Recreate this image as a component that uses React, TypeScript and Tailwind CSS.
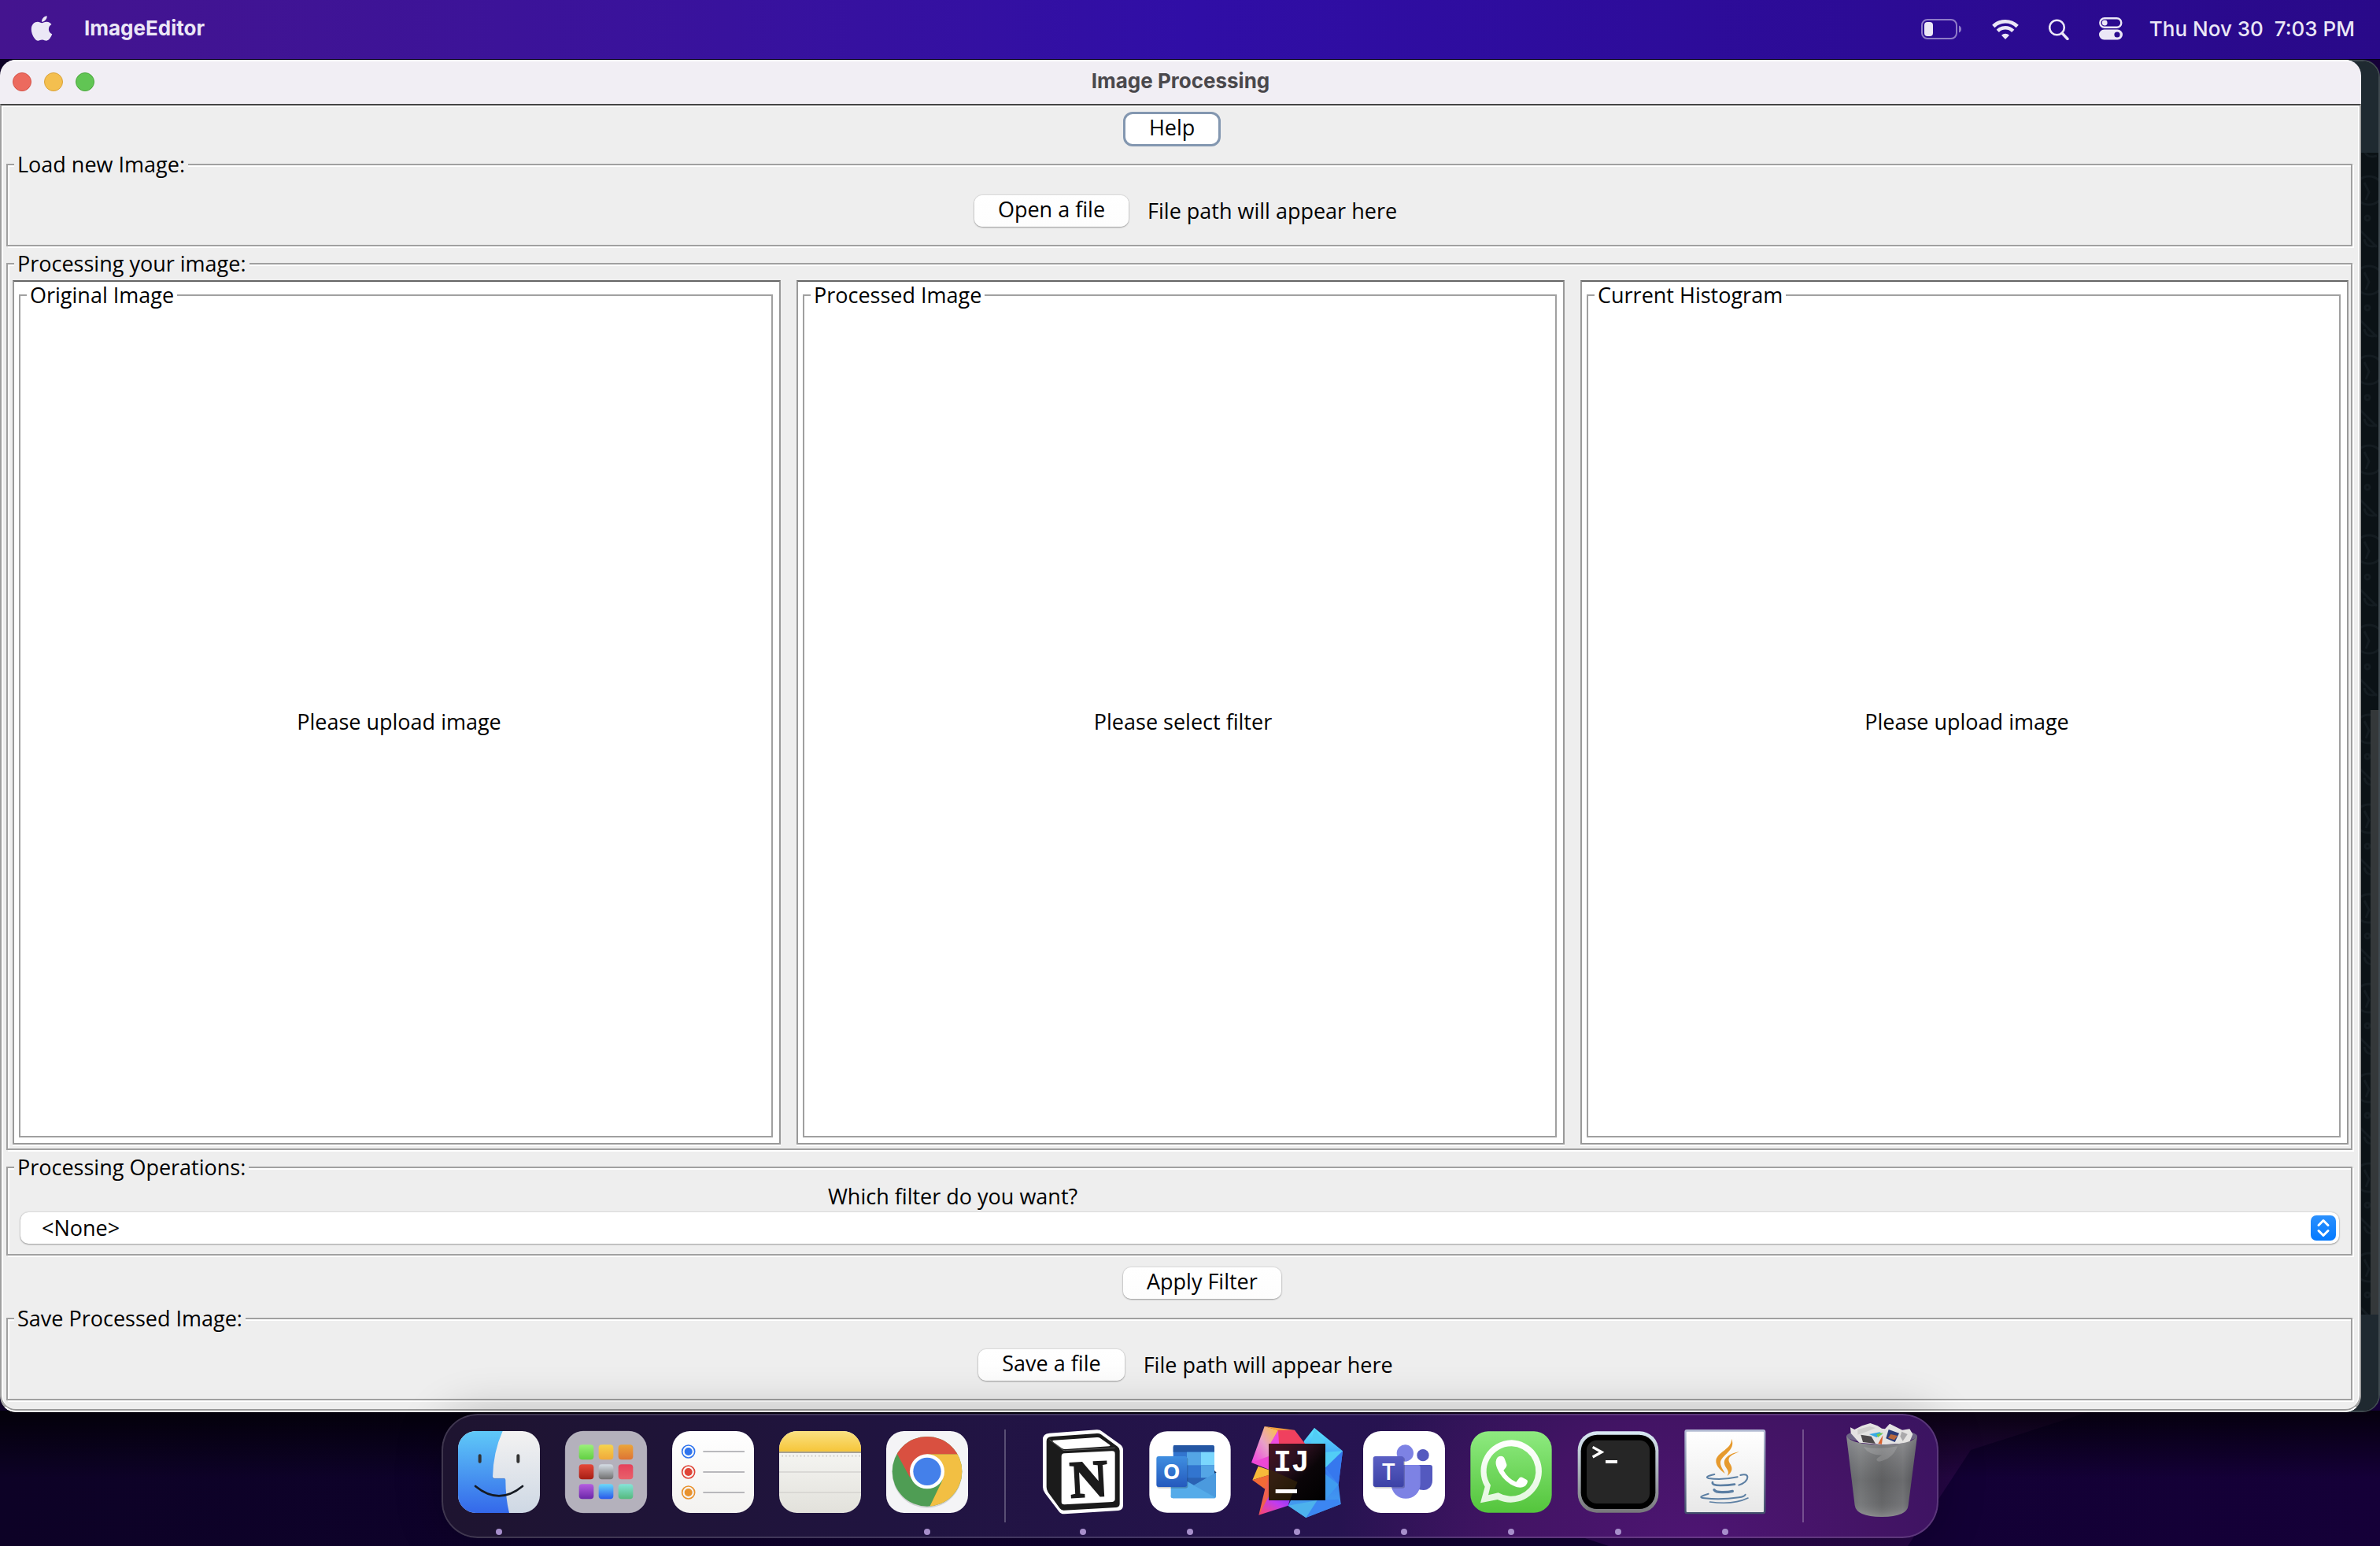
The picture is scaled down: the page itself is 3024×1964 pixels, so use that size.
import React from "react";
import { FaApple } from "react-icons/fa";

const etched =
  "border-2 border-[#a0a0a0] shadow-[2px_2px_0_#fff,inset_2px_2px_0_#fff]";

function Group({
  title,
  className = "",
  white = false,
  children,
}: {
  title: string;
  className?: string;
  white?: boolean;
  children: React.ReactNode;
}) {
  return (
    <fieldset className={`flex min-w-0 flex-col ${etched} ${className}`}>
      <legend className={`ml-2 px-1 leading-[30px] ${white ? "bg-white" : "bg-[#eeeeee]"}`}>
        {title}
      </legend>
      {children}
    </fieldset>
  );
}

function PushButton({ children, focused = false }: { children: React.ReactNode; focused?: boolean }) {
  return (
    <button
      type="button"
      className={
        focused
          ? "h-11 rounded-[12px] border-3 border-[#8397b0] bg-white px-[30px] pb-1 leading-[30px]"
          : "h-10 rounded-[10px] bg-linear-to-b from-white to-[#fdfdfd] px-[30px] pb-1 leading-[30px] shadow-[0_0_2px_rgba(0,0,0,0.25),0_1px_2px_rgba(0,0,0,0.3)]"
      }
    >
      {children}
    </button>
  );
}

function FileRow({ action }: { action: string }) {
  return (
    <div className="flex items-center justify-center gap-6 pt-6 pb-[23px] pl-4">
      <PushButton>{action}</PushButton>
      <span>File path will appear here</span>
    </div>
  );
}

function Panel({ title, message }: { title: string; message: string }) {
  return (
    <div className="flex flex-1 flex-col border-2 border-[#999999] border-t-[#666666] bg-white pt-[2px] pr-2 pb-[7px] pl-[6px] shadow-[0_2px_0_#fff]">
      <Group title={title} white className="flex-1">
        <div className="flex h-full flex-1 items-center justify-center pl-2">{message}</div>
      </Group>
    </div>
  );
}

function BatteryIcon() {
  return (
    <svg width="52" height="30" viewBox="0 0 52 30" fill="none" aria-label="Battery">
      <rect x="1" y="3" width="44" height="24" rx="7" stroke="#8f7cc8" strokeWidth="2" />
      <rect x="4" y="6" width="11" height="18" rx="4" fill="#ebe7f6" />
      <path d="M48 10.500c4 1.500 4 7.500 0 9z" fill="#8f7cc8" />
    </svg>
  );
}

function WifiIcon() {
  return (
    <svg width="34" height="28" viewBox="0 0 34 28" fill="none" aria-label="Wi-Fi">
      <path d="M1.800 10.500A21.500 21.500 0 0 1 32.200 10.500" stroke="#ebe7f6" strokeWidth="4.600" />
      <path d="M7.300 16.300A13.700 13.700 0 0 1 26.700 16.300" stroke="#ebe7f6" strokeWidth="4.600" />
      <path d="M17 27l-5-5.200a7.200 7.200 0 0 1 10 0z" fill="#ebe7f6" />
    </svg>
  );
}

function SearchIcon() {
  return (
    <svg width="26" height="28" viewBox="0 0 26 28" fill="none" aria-label="Search">
      <circle cx="10.500" cy="12" r="9.300" stroke="#ebe7f6" strokeWidth="2.600" />
      <path d="M17 19l7 7.500" stroke="#ebe7f6" strokeWidth="3.400" strokeLinecap="round" />
    </svg>
  );
}

function ControlIcon() {
  return (
    <svg width="30" height="29" viewBox="0 0 30 29" fill="none" aria-label="Control Center">
      <rect x="1.300" y="1.300" width="27" height="11.400" rx="5.700" stroke="#ebe7f6" strokeWidth="2.400" />
      <circle cx="7.200" cy="7" r="3.400" fill="#ebe7f6" />
      <path
        fillRule="evenodd"
        d="M6.500 15.500h17a6.500 6.500 0 0 1 0 13h-17a6.500 6.500 0 0 1 0-13zM23 18.400a3.600 3.600 0 1 0 0 7.200a3.600 3.600 0 0 0 0-7.200z"
        fill="#ebe7f6"
      />
    </svg>
  );
}

function MenuBar() {
  return (
    <header className="flex h-[76px] items-center border-b border-[#05001a] bg-linear-to-r from-[#44148f] via-[#300ea6] to-[#290989] pr-8 pl-[39px] font-['Inter'] text-[26px] text-[#ebe7f6]">
      <button type="button" aria-label="Apple menu" className="mr-10 pb-1">
        <FaApple className="h-9 w-7" />
      </button>
      <button type="button" className="pb-1 font-bold">ImageEditor</button>
      <div className="ml-auto flex items-center gap-[38px] pb-[2px]">
        <BatteryIcon />
        <WifiIcon />
        <SearchIcon />
        <ControlIcon />
        <span className="-ml-1 font-medium whitespace-pre">Thu Nov 30  7:03 PM</span>
      </div>
    </header>
  );
}

function BackWindow() {
  const rows = Array.from({ length: 13 }, (_, i) => i);
  return (
    <div className="absolute inset-y-0 right-0 flex w-40 flex-col overflow-hidden rounded-[22px] border-2 border-[#3f494f] bg-[#0b1216]">
      <div className="h-[116px] bg-[#1f2a31]" />
      <div className="relative flex-1 overflow-hidden">
        <svg className="absolute top-0 right-0" width="24" height="1480" fill="none" stroke="#141c21" strokeWidth="3" aria-hidden="true">
          {rows.map((i) => (
            <g key={i} transform={`translate(0 ${i * 114})`}>
              <circle cx="12" cy="48" r="18" />
              <path d="M6 38l6 12l-4 10" />
              <circle cx="10" cy="83" r="3" />
              <path d="M0 98l22 22M22 4q-14 4-16-8" />
            </g>
          ))}
        </svg>
        <div className="absolute right-0 bottom-0 h-[52%] w-[10px] bg-[#34383a]" />
      </div>
      <div className="h-[122px] bg-[#1f2930]" />
    </div>
  );
}

function AppWindow() {
  return (
    <main className="relative flex flex-1 flex-col overflow-hidden rounded-[20px]">
      <div className="grid h-14 grid-cols-[1fr_auto_1fr] items-center border-t-2 border-white bg-[#f1eef4] px-4 pb-[2px] font-['Inter']">
        <div className="flex gap-4">
          <button type="button" aria-label="Close" className="size-6 rounded-full border border-[#d5544a] bg-[#ec6a5e]" />
          <button type="button" aria-label="Minimize" className="size-6 rounded-full border border-[#d9a23a] bg-[#f4bf4f]" />
          <button type="button" aria-label="Zoom" className="size-6 rounded-full border border-[#4aa73c] bg-[#61c554]" />
        </div>
        <h1 className="pb-[2px] text-[26px] font-bold text-[#4a484c]">Image Processing</h1>
      </div>

      <div className="flex flex-1 flex-col rounded-b-[20px] border-2 border-[#a0a0a0] border-t-[#444444] border-b-white bg-[#eeeeee] pt-2 pr-[9px] pb-[13px] pl-[6px] text-black shadow-[inset_0_-2px_0_#999,inset_0_0_0_2px_#fff]">
        <div className="pb-2 pl-[47.6%]">
          <PushButton focused>Help</PushButton>
        </div>

        <Group title="Load new Image:">
          <FileRow action="Open a file" />
        </Group>

        <Group title="Processing your image:" className="mt-[7px] flex-1">
          <div className="flex h-full flex-1 gap-5 pt-[6px] pr-[3px] pb-[5px] pl-[6px]">
            <Panel title="Original Image" message="Please upload image" />
            <Panel title="Processed Image" message="Please select filter" />
            <Panel title="Current Histogram" message="Please upload image" />
          </div>
        </Group>

        <Group title="Processing Operations:" className="mt-[7px]">
          <label htmlFor="filter" className="pt-[7px] pl-[35%] leading-[30px]">
            Which filter do you want?
          </label>
          <div className="relative mt-[5px] mr-[15px] mb-[13px] ml-4">
            <select
              id="filter"
              className="block h-10 w-full appearance-none rounded-[10px] bg-white px-[27px] leading-[30px] shadow-[0_0_2px_rgba(0,0,0,0.25),0_1px_2px_rgba(0,0,0,0.3)]"
            >
              <option>&lt;None&gt;</option>
            </select>
            <svg className="pointer-events-none absolute top-1 right-1" width="32" height="32" viewBox="0 0 32 32" fill="none" aria-hidden="true">
              <defs>
                <linearGradient id="stepper" x2="0" y2="1">
                  <stop stopColor="#2b90fd" />
                  <stop offset="1" stopColor="#047aff" />
                </linearGradient>
              </defs>
              <rect width="32" height="32" rx="7" fill="url(#stepper)" />
              <path d="M10 12.500l6-6l6 6M10 19.500l6 6l6-6" stroke="#fff" strokeWidth="3" strokeLinecap="round" strokeLinejoin="round" />
            </svg>
          </div>
        </Group>

        <div className="pt-[15px] pb-[10px] pl-[47.6%]">
          <PushButton>Apply Filter</PushButton>
        </div>

        <Group title="Save Processed Image:">
          <FileRow action="Save a file" />
        </Group>
      </div>
    </main>
  );
}

function DockItem({
  name,
  box = "0 0 408 474",
  running = false,
  children,
}: {
  name: string;
  box?: string;
  running?: boolean;
  children: React.ReactNode;
}) {
  return (
    <button type="button" aria-label={name} className="relative block w-[136px]">
      <svg width="136" height="158" viewBox={box} aria-hidden="true">
        {children}
      </svg>
      {running && <span className="absolute bottom-1 left-16 size-2 rounded-full bg-[#a78fcb]" />}
    </button>
  );
}

function DockDivider() {
  return (
    <div className="flex w-[62px] items-center justify-center">
      <div className="h-[118px] w-[2px] bg-white/25" />
    </div>
  );
}

function Grad({ id, from, to }: { id: string; from: string; to: string }) {
  return (
    <linearGradient id={id} x2="0" y2="1">
      <stop stopColor={from} />
      <stop offset="1" stopColor={to} />
    </linearGradient>
  );
}

const launchTiles = [
  ["#9bf07a", "#62cf43"],
  ["#f6d34d", "#f0a93b"],
  ["#eba53a", "#dd7434"],
  ["#e5483a", "#a61e14"],
  ["#d5dde5", "#6f6f6f"],
  ["#e6415a", "#e8616c"],
  ["#b55de0", "#6a26a8"],
  ["#69d8fa", "#2857ea"],
  ["#84e4d8", "#55b97d"],
];

function Dock() {
  return (
    <nav
      aria-label="Dock"
      className="relative mx-auto mt-[2px] mb-[10px] flex h-[158px] rounded-[46px] bg-[radial-gradient(ellipse_460px_300px_at_84%_100%,#4d1572_0%,#431465_50%,transparent_100%),linear-gradient(90deg,#1e1430_0%,#201440_30%,#261350_60%,#2b1454_75%,#36145f_100%)] px-[5px] shadow-[inset_0_0_0_2px_rgba(255,255,255,0.15),0_0_60px_rgba(0,0,0,0.24)]"
    >
      <DockItem name="Finder" running>
        <defs>
          <Grad id="finderBlue" from="#5fc9f8" to="#3468ea" />
          <Grad id="finderWhite" from="#f3f2f2" to="#ced8e4" />
          <clipPath id="finderClip"><rect x="48" y="66" width="312" height="312" rx="68" /></clipPath>
        </defs>
        <g clipPath="url(#finderClip)">
          <rect x="48" y="66" width="312" height="312" fill="url(#finderWhite)" />
          <path d="M48 66h170q-36 80-38 175q0 6 6 6h39q4 0 4 5q0 70 14 126H48z" fill="url(#finderBlue)" />
          <path d="M180 241q0 6 6 6h40" fill="none" stroke="#2b63c0" strokeOpacity=".5" strokeWidth="3" />
          <path d="M131 160v22M277 160v22" stroke="#333" strokeWidth="12" strokeLinecap="round" />
          <path d="M114 276q90 74 180 0" fill="none" stroke="#151a22" strokeWidth="8" strokeLinecap="round" />
        </g>
      </DockItem>

      <DockItem name="Launchpad">
        <defs>
          {launchTiles.map(([a, b], i) => (
            <Grad key={i} id={`tile${i}`} from={a} to={b} />
          ))}
        </defs>
        <rect x="49" y="67" width="310" height="310" rx="68" fill="#b4b1bc" stroke="#cbc9d2" strokeWidth="2" />
        {launchTiles.map((_, i) => (
          <rect
            key={i}
            x={101 + (i % 3) * 75}
            y={118 + Math.floor(i / 3) * 75}
            width="56"
            height="57"
            rx="12"
            fill={`url(#tile${i})`}
          />
        ))}
      </DockItem>

      <DockItem name="Reminders">
        <defs><Grad id="paper" from="#ffffff" to="#f3f2f0" /></defs>
        <rect x="48" y="66" width="312" height="312" rx="68" fill="url(#paper)" />
        {["#2f74ee", "#df4538", "#e8922e"].map((c, i) => (
          <g key={c}>
            <circle cx="110" cy={144 + i * 78} r="24" fill="none" stroke={c} strokeWidth="5" />
            <circle cx="110" cy={144 + i * 78} r="15" fill={c} />
            <path d={`M166 ${144 + i * 78}h158`} stroke="#a3a3a8" strokeWidth="5" />
          </g>
        ))}
      </DockItem>

      <DockItem name="Notes">
        <defs>
          <Grad id="noteTop" from="#fae182" to="#f6c63a" />
          <Grad id="notePage" from="#fbfbf9" to="#e2e1db" />
          <clipPath id="noteClip"><rect x="48" y="66" width="312" height="312" rx="68" /></clipPath>
        </defs>
        <g clipPath="url(#noteClip)">
          <rect x="48" y="66" width="312" height="312" fill="url(#notePage)" />
          <rect x="48" y="66" width="312" height="78" fill="url(#noteTop)" />
          <path d="M48 147h312" stroke="#8b8473" strokeWidth="5" />
          <path d="M58 161h300" stroke="#c9c7c3" strokeWidth="5" strokeDasharray="5 9" />
          <path d="M48 222h312M48 300h312" stroke="#d3d2d0" strokeWidth="5" />
        </g>
      </DockItem>

      <DockItem name="Chrome" running>
        <defs><clipPath id="chromeClip"><circle cx="204" cy="220" r="133" /></clipPath></defs>
        <rect x="48" y="66" width="312" height="312" rx="68" fill="#f4f4f6" />
        <circle cx="204" cy="226" r="133" fill="#00000022" />
        <g clipPath="url(#chromeClip)">
          <rect x="60" y="80" width="290" height="290" fill="#4f9d54" />
          <path d="M204 154h150v220H204l58-120z" fill="#f2bf43" />
          <path d="M70 60h280v94H204l-66 88L86 146z" fill="#d95040" />
        </g>
        <circle cx="204" cy="220" r="66" fill="#fff" />
        <circle cx="204" cy="220" r="53" fill="#4480ea" />
      </DockItem>

      <DockDivider />

      <DockItem name="Notion" running box="-6 0 408 474">
        <path d="M70 74L250 61q12-1 22 7l68 49q11 8 11 22v210q0 18-18 20l-205 13q-14 1-22-10l-52-68q-9-12-9-26V98q0-22 25-24z" fill="#fff" />
        <path d="M80 87l172-12q8-1 15 4l63 46q8 6 8 16v202q0 13-13 14l-199 11q-10 1-16-7l-45-62q-6-9-6-20V104q0-16 21-17z" fill="#1b1b1b" />
        <path d="M84 107q-5-5 3-6l164-11q8-1 14 4l34 24q6 5-2 6l-164 11q-9 1-16-4z" fill="#fff" />
        <path d="M127 151l182-9q11 0 11 10v173q0 10-10 11l-183 10q-11 0-11-10V162q0-10 11-11z" fill="#fff" />
        <path d="M70 98l48 38q4 4 12 4l190-10" fill="none" stroke="#5a5a5a" strokeWidth="3" />
        <text x="220" y="315" textAnchor="middle" fontFamily="Liberation Serif, serif" fontWeight="700" fontSize="198" fill="#1b1b1b" stroke="#1b1b1b" strokeWidth="7" transform="rotate(-3 220 250)">N</text>
      </DockItem>

      <DockItem name="Outlook" running box="402 0 408 474">
        <defs>
          <Grad id="outTile" from="#3f8ee0" to="#2459bd" />
          <clipPath id="outClip"><path d="M551 119h138q10 0 10 10v190H541V129q0-10 10-10z" /></clipPath>
        </defs>
        <rect x="451" y="67" width="310" height="310" rx="68" fill="#fff" />
        <g clipPath="url(#outClip)">
          <rect x="541" y="119" width="158" height="200" fill="#3275cf" />
          <rect x="541" y="119" width="158" height="27" fill="#2456a3" />
          <rect x="594" y="146" width="54" height="50" fill="#54a5e5" />
          <rect x="648" y="146" width="52" height="50" fill="#7ad6fd" />
          <rect x="648" y="196" width="52" height="50" fill="#54a5e5" />
          <rect x="541" y="244" width="158" height="80" fill="#2a62b4" />
        </g>
        <path d="M699 216l8 8l-8 8z" fill="#16305e" />
        <path d="M622 272l83-48v90q0 8-8 8H541q-8 0-8-10z" fill="#4a9de0" />
        <path d="M533 222l170 98q-3 2-8 2H541q-8 0-8-9z" fill="#55abe9" />
        <path d="M705 226v90L620 273z" fill="#4b9ade" />
        <rect x="480" y="166" width="118" height="118" rx="9" fill="#00000033" />
        <rect x="478" y="162" width="117" height="117" rx="9" fill="url(#outTile)" />
        <text x="536" y="249" textAnchor="middle" fontFamily="Open Sans, sans-serif" fontWeight="700" fontSize="82" fill="#fff">O</text>
      </DockItem>

      <DockItem name="IntelliJ IDEA" running box="810 0 408 474">
        <defs>
          <linearGradient id="ijA" x1="0" y1="1" x2="1" y2="0">
            <stop stopColor="#f03ce0" /><stop offset=".5" stopColor="#e8a0c8" /><stop offset="1" stopColor="#fbc63c" />
          </linearGradient>
          <linearGradient id="ijB" x1="0" y1="1" x2="1" y2="0">
            <stop stopColor="#ff4766" /><stop offset=".6" stopColor="#c03cf0" /><stop offset="1" stopColor="#7a3cf8" />
          </linearGradient>
          <linearGradient id="ijC" x1="0" y1="0" x2="0" y2="1">
            <stop stopColor="#5ae6ff" /><stop offset=".5" stopColor="#3a7ff2" /><stop offset="1" stopColor="#46a6ee" />
          </linearGradient>
          <linearGradient id="ijD" x2="1" y2="1">
            <stop stopColor="#4a1420" /><stop offset=".35" stopColor="#2c1020" /><stop offset=".6" stopColor="#0a0508" /><stop offset="1" stopColor="#000" />
          </linearGradient>
        </defs>
        <path d="M1040 104l40-50l108 88l-16 128l9 74l-133 52l-68-46l60-120z" fill="url(#ijC)" />
        <path d="M1080 54l-14 62h56zM1188 142l-66 64v-60z" fill="#52cdf6" />
        <path d="M1188 142l-66 64l50 64z" fill="#3678ee" />
        <path d="M1122 230v98l50-58z" fill="#3f9cf0" />
        <path d="M1181 344l-133 52l44-66l80-4z" fill="#3c86f2" />
        <path d="M1048 396l-68-46l110-20z" fill="#4db2ec" />
        <path d="M840 186l50-138l52 14l-14 60l-22 60z" fill="url(#ijA)" />
        <path d="M890 48l115 14l-63 2z" fill="#f2a03c" />
        <path d="M942 62h63l50 66H906z" fill="#f0405e" />
        <path d="M942 64l-36 60v20l40-16z" fill="#ee4ce0" />
        <path d="M840 186l66-24v50z" fill="#ee48d4" />
        <path d="M866 200l40 14v20l-62 19z" fill="#f7b93a" />
        <path d="M844 253l62-20v30l-14 24z" fill="#f26a36" />
        <path d="M906 240v90l-38 56l24-100z" fill="#f0604e" />
        <path d="M868 386l38-70h84l-10 34z" fill="url(#ijB)" />
        <rect x="906" y="114" width="216" height="216" fill="url(#ijD)" />
        <path d="M906 210l110 50l-30 70h-80z" fill="#3a2a08" fillOpacity=".6" />
        <text x="924" y="220" fontFamily="Liberation Mono, monospace" fontWeight="700" fontSize="114" fill="#fff">IJ</text>
        <rect x="932" y="288" width="82" height="15" fill="#fff" />
      </DockItem>

      <DockItem name="Teams" running>
        <defs><Grad id="teamTile" from="#5a5fc4" to="#3c42a6" /></defs>
        <rect x="48" y="66" width="312" height="312" rx="68" fill="#fff" />
        <circle cx="276" cy="158" r="23" fill="#5459bf" />
        <path d="M255 195h48q9 0 9 9v50c0 22-16 37-34 37q-14 0-23-6z" fill="#5459bf" />
        <path d="M155 195h102q9 0 9 9v64a53 53 0 0 1-111 0z" fill="#7d82e4" />
        <circle cx="208" cy="150" r="32" fill="#7d82e4" />
        <rect x="90" y="166" width="117" height="118" rx="9" fill="#00000033" />
        <rect x="86" y="162" width="117" height="117" rx="9" fill="url(#teamTile)" />
        <text x="145" y="252" textAnchor="middle" fontFamily="Open Sans, sans-serif" fontWeight="600" fontSize="88" fill="#fff">T</text>
      </DockItem>

      <DockItem name="WhatsApp" running box="6 0 408 474">
        <defs>
          <Grad id="wa" from="#8eea80" to="#54c53c" />
          <Grad id="waRing" from="#ffffff" to="#e4f7df" />
        </defs>
        <rect x="55" y="67" width="310" height="310" rx="68" fill="url(#wa)" />
        <path
          fillRule="evenodd"
          d="M212 100a119 119 0 1 1-54 227l-65 13l17-62a119 119 0 0 1 102-178zM212 124a95 95 0 0 0-80 148l-9 38l38-9A95 95 0 1 0 212 124z"
          fill="url(#waRing)"
        />
        <path d="M163 163q16-5 22 8l8 22q2 6-3 12l-9 11q18 32 48 44l13-16q4-4 10-2l18 10q5 3 1 13q-9 21-38 15c-46-14-76-60-81-88q-2-21 11-29z" fill="#fff" />
      </DockItem>

      <DockItem name="Terminal" running box="414 0 408 474">
        <defs><Grad id="termRim" from="#d8e8f4" to="#77777a" /></defs>
        <rect x="464" y="67" width="308" height="310" rx="72" fill="url(#termRim)" />
        <rect x="476" y="80" width="284" height="283" rx="62" fill="#000" />
        <rect x="498" y="101" width="240" height="241" rx="38" fill="#262626" />
        <path d="M521 127l34 19l-34 19" fill="none" stroke="#fff" strokeWidth="10" />
        <rect x="570" y="177" width="45" height="12" fill="#fff" />
      </DockItem>

      <DockItem name="Java" running box="822 0 408 474">
        <defs><Grad id="javaPage" from="#ffffff" to="#e8e8e8" /><Grad id="javaRim" from="#b4bcd4" to="#42506c" /></defs>
        <rect x="871" y="60" width="309" height="322" rx="9" fill="url(#javaRim)" />
        <rect x="878" y="68" width="295" height="307" rx="3" fill="url(#javaPage)" />
        <path d="M1050 95c20 45-42 62-42 92c0 16 12 28 17 41c-18-14-35-30-34-49c2-33 62-44 59-84z" fill="#e69a2e" />
        <path d="M1080 145c-44 16-46 28-34 48c11 18 4 32-12 44c8-16 2-22-6-34c-16-26 4-50 52-58z" fill="#e69a2e" />
        <g fill="none" stroke="#5c7fa3" strokeLinecap="round">
          <path d="M985 231q-42 9-22 15q50 8 110-5" strokeWidth="6" />
          <path d="M1084 234c36-12 38 22-6 38" strokeWidth="6" />
          <path d="M978 261q-4 12 30 12q30 0 54-4" strokeWidth="8" />
          <path d="M984 290q6 10 34 9q22 0 36-4" strokeWidth="10" />
          <path d="M962 305q-48 14-14 17q60 7 130-3q22-3 25-11" strokeWidth="6" />
          <path d="M968 336q90 12 145-15" strokeWidth="5" />
        </g>
      </DockItem>

      <DockDivider />

      <DockItem name="Trash" box="-27 18 408 474">
        <defs>
          <linearGradient id="bin" x2="1" y2="0">
            <stop stopColor="#6f7177" /><stop offset=".2" stopColor="#7f8183" /><stop offset=".5" stopColor="#6b6c6e" /><stop offset=".8" stopColor="#7a7b7e" /><stop offset="1" stopColor="#5a5b60" />
          </linearGradient>
          <linearGradient id="binShade" x2="0" y2="1">
            <stop stopColor="#fff" stopOpacity=".18" /><stop offset=".55" stopColor="#000" stopOpacity=".12" /><stop offset=".8" stopColor="#000" stopOpacity=".06" /><stop offset="1" stopColor="#fff" stopOpacity=".18" />
          </linearGradient>
        </defs>
        <ellipse cx="180" cy="103" rx="135" ry="26" fill="#6d6585" />
        <path d="M62 92l-2-22l16 8l28-14l32-10l28 10l16 10l12 2l18-20l36 18l12 6l28-4l12 20l-14 34l-100 6l-90-8z" fill="#e4e3e2" />
        <path d="M88 78l46-12l22 6l-28 12l-40 14z" fill="#cfcecd" />
        <path d="M100 98l40 6l16 28l-48-6z" fill="#4e4a4c" />
        <path d="M132 96l40-8l10 8l-22 12z" fill="#36a9e4" />
        <path d="M160 96l26-6l-20 18z" fill="#7ccb46" />
        <path d="M184 100l-4 34l-14-2z" fill="#d9622e" />
        <path d="M206 78l40 14l-16 34l-34-14z" fill="#2e3c78" />
        <path d="M214 96l26 6l-12 16l-24-8z" fill="#b8663c" />
        <path d="M256 86l22 10l-18 26l-10-18z" fill="#aaa9ab" />
        <path d="M45 103q20 33 135 33t135-33l-34 264q-4 44-101 44T77 367z" fill="url(#bin)" />
        <path d="M45 103q20 33 135 33t135-33l-34 264q-4 44-101 44T77 367z" fill="url(#binShade)" />
        <path d="M110 144q60 12 130-2q-20 50-70 58q-24-6 10-24q-50 0-70-32z" fill="#fff" fillOpacity=".15" />
      </DockItem>
    </nav>
  );
}

export default function App() {
  return (
    <div className="relative flex min-h-screen flex-col overflow-hidden bg-linear-to-r from-[#0d0226] via-[#0f0130] to-[#150038] font-['Open_Sans',sans-serif] text-[27px] leading-[30px]">
      <svg className="absolute right-0 bottom-0" width="1400" height="180" viewBox="0 0 1400 180" aria-hidden="true">
        <defs>
          <linearGradient id="beam" x2="1" y2="0">
            <stop stopColor="#32085a" />
            <stop offset="1" stopColor="#22063f" />
          </linearGradient>
        </defs>
        <path d="M0 0h1060L880 58L800 180H420L360 160z" fill="url(#beam)" />
      </svg>
      <div className="pointer-events-none absolute inset-x-0 bottom-0 h-[172px] bg-linear-to-b from-black/75 to-transparent to-50%" />
      <MenuBar />
      <div className="relative flex flex-1 pr-6">
        <BackWindow />
        <AppWindow />
      </div>
      <Dock />
    </div>
  );
}
